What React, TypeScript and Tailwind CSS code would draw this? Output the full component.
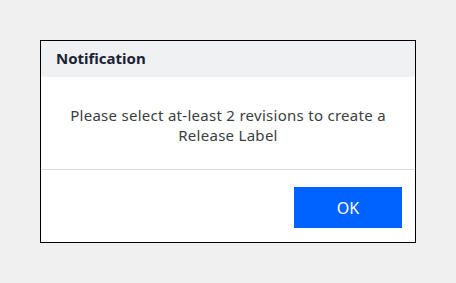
export default function App() {
  return (
    <div className="w-[456px] h-[283px] bg-[#f0f0f0] pl-[40px] pt-[40px] font-['Noto_Sans',sans-serif]">
      <div className="w-[376px] h-[203px] bg-white border border-black flex flex-col">
        {/* Header */}
        <div className="h-[36px] bg-[#f0f1f3] flex items-center pl-[15px] pb-[2px] text-[15px] font-bold text-[#1b2335]">
          Notification
        </div>
        {/* Body */}
        <div className="h-[93px] flex items-center justify-center text-center px-5 pt-[4px] text-[15px] leading-[20px] tracking-[0.28px] text-[#3a3d42] border-b border-[#dcdcdc]">
          Please select at-least 2 revisions to create a Release Label
        </div>
        {/* Footer */}
        <div className="flex-1 flex justify-end items-start pt-[17px] pr-[13px]">
          <button className="w-[108px] h-[41px] bg-[#0062ff] text-white text-[16px]">OK</button>
        </div>
      </div>
    </div>
  );
}
